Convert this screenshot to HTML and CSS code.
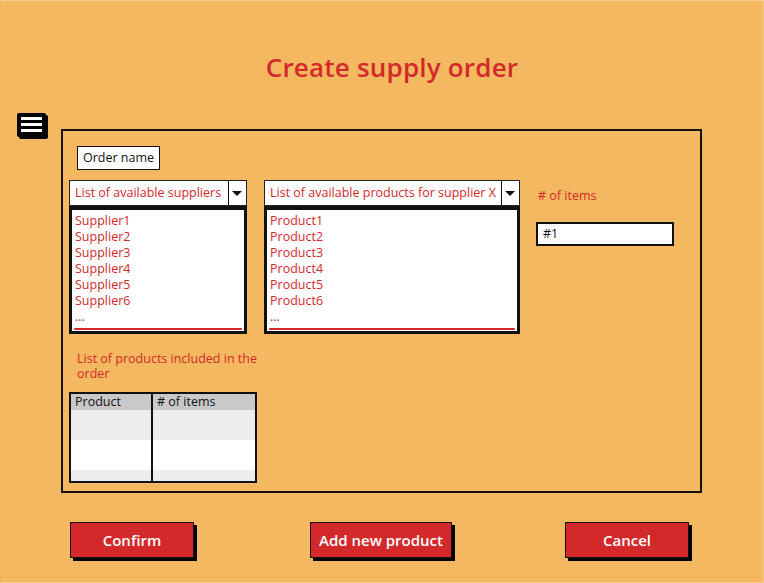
FILE: index.html
```html
<!DOCTYPE html>
<html>
<head>
<meta charset="UTF-8" />
<title>Create supply order</title>
<link rel="stylesheet" href="styles.css">
</head>
<body>

<div id="wrapper">
	<h1 class="title">Create supply order</h1>

	<div class="middle">
		<div class="menu-icon">
			<svg width="32" height="27" viewBox="0 0 32 27">
				<rect x="2" y="2" width="29" height="24" rx="2" fill="#000"/>
				<rect x="0" y="0" width="29" height="24" rx="2" fill="#000"/>
				<rect x="4" y="4" width="21" height="3" fill="#fff"/>
				<rect x="4" y="10" width="21" height="3" fill="#fff"/>
				<rect x="4" y="16" width="21" height="3" fill="#fff"/>
			</svg>
		</div>

		<div id="panel">
			<div class="order-name">Order name</div>

			<div class="columns">
				<div class="col col-suppliers">
					<div class="combo">
						<span class="combo-text">List of available suppliers</span>
						<span class="combo-btn"></span>
					</div>
					<ul class="listbox">
						<li>Supplier1</li>
						<li>Supplier2</li>
						<li>Supplier3</li>
						<li>Supplier4</li>
						<li>Supplier5</li>
						<li>Supplier6</li>
						<li class="more">...</li>
					</ul>
				</div><!-- suppliers -->

				<div class="col col-products">
					<div class="combo">
						<span class="combo-text">List of available products for supplier X</span>
						<span class="combo-btn"></span>
					</div>
					<ul class="listbox">
						<li>Product1</li>
						<li>Product2</li>
						<li>Product3</li>
						<li>Product4</li>
						<li>Product5</li>
						<li>Product6</li>
						<li class="more">...</li>
					</ul>
				</div><!-- products -->

				<div class="col col-items">
					<div class="label">&#35; of items</div>
					<div class="textbox">#1</div>
				</div>
			</div><!-- columns -->

			<div class="label included">List of products included in the order</div>

			<table class="grid">
				<tr class="head"><td class="c1">Product</td><td># of items</td></tr>
				<tr class="odd"><td class="c1"></td><td></td></tr>
				<tr class="even"><td class="c1"></td><td></td></tr>
				<tr class="odd last"><td class="c1"></td><td></td></tr>
			</table>
		</div><!-- panel -->
	</div>

	<div class="buttons">
		<a class="btn btn-confirm" href="#">Confirm</a>
		<a class="btn btn-add" href="#">Add new product</a>
		<a class="btn btn-cancel" href="#">Cancel</a>
	</div>
</div><!-- wrapper -->

</body>
</html>
```

FILE: styles.css
```css
html, body {
	margin: 0;
	padding: 0;
}

body {
	font-family: "Open Sans", "Noto Sans", sans-serif;
	font-size: 13px;
	background: #f3b860;
}

#wrapper {
	width: 762px;
	height: 581px;
	border: 1px solid #f7c98a;
	border-left-color: #f0b25a;
	background: #f3b860;
	position: relative;
}

.title {
	margin: 0;
	padding: 49px 0 0 20px;
	height: 35px;
	text-align: center;
	font-size: 26px;
	font-weight: 600;
	line-height: 35px;
	color: #d3292a;
	letter-spacing: 0.2px;
}

.middle {
	display: flex;
	align-items: flex-start;
	margin-top: 28px;
}

.menu-icon {
	margin-left: 16px;
	width: 44px;
	height: 27px;
}

.menu-icon svg {
	display: block;
}

#panel {
	margin-top: 16px;
	width: 637px;
	height: 360px;
	border: 2px solid #111;
	padding: 0;
}

.order-name {
	display: inline-block;
	margin: 15px 0 0 14px;
	height: 22px;
	padding: 0 5px;
	line-height: 22px;
	background: #fff;
	border: 1.5px solid #111;
	color: #111;
	font-size: 12.5px;
}

.columns {
	display: flex;
	align-items: flex-start;
	margin: 10px 0 0 6px;
}

.col-suppliers {
	width: 178px;
}

.col-products {
	width: 256px;
	margin-left: 17px;
}

.col-items {
	margin-left: 16px;
	width: 138px;
}

.combo {
	display: flex;
	height: 26px;
	background: #fff;
	border: 1px solid #222;
	box-sizing: border-box;
}

.combo-text {
	flex: 1;
	padding-left: 5px;
	line-height: 24px;
	color: #d3292a;
	font-size: 12.5px;
	white-space: nowrap;
	overflow: hidden;
}

.combo-btn {
	width: 17px;
	border-left: 1.5px solid #111;
	position: relative;
}

.combo-btn:after {
	content: "";
	position: absolute;
	left: 3px;
	top: 10px;
	border-left: 5px solid transparent;
	border-right: 5px solid transparent;
	border-top: 5px solid #111;
}

.listbox {
	list-style-type: none;
	margin: 0;
	padding: 3px 0 0 3px;
	height: 118px;
	background: #fff;
	border: 3px solid #111;
	border-top-width: 4px;
	position: relative;
}

.listbox li {
	height: 16px;
	line-height: 16px;
	color: #d3292a;
	font-size: 12.5px;
}

.listbox:after {
	content: "";
	position: absolute;
	left: 2px;
	right: 2px;
	bottom: 1px;
	height: 2px;
	background: #d3292a;
	border-radius: 2px;
}

.label {
	color: #d3292a;
	font-size: 12.5px;
	line-height: 15px;
}

.col-items .label {
	margin: 8px 0 0 2px;
}

.textbox {
	margin-top: 19px;
	height: 20px;
	line-height: 20px;
	padding-left: 5px;
	background: #fff;
	border: 2px solid #111;
	color: #111;
	font-size: 12.5px;
}

.included {
	width: 190px;
	margin: 17px 0 0 14px;
}

.grid {
	margin: 11px 0 0 6px;
	width: 188px;
	border-collapse: collapse;
	border: 2px solid #111;
	font-size: 12.5px;
	color: #111;
}

.grid td {
	padding: 0 0 0 4px;
	vertical-align: top;
}

.grid td.c1 {
	width: 76px;
	border-right: 2px solid #111;
}

.grid tr.head td {
	height: 16px;
	line-height: 15px;
	background: #c9c9c9;
}

.grid tr.odd td {
	height: 30px;
	background: #ececec;
}

.grid tr.even td {
	height: 30px;
	background: #fff;
}

.grid tr.last td {
	height: 11px;
}

.buttons {
	display: flex;
	margin-top: 29px;
}

.btn {
	display: block;
	height: 34px;
	line-height: 34px;
	background: #d3292a;
	color: #fff;
	font-size: 15px;
	font-weight: 600;
	text-align: center;
	text-decoration: none;
	border: 1px solid #111;
	box-shadow: 3px 3px 0 #000;
}

.btn-confirm {
	margin-left: 69px;
	width: 122px;
}

.btn-add {
	margin-left: 116px;
	width: 140px;
}

.btn-cancel {
	margin-left: 113px;
	width: 122px;
}
```
